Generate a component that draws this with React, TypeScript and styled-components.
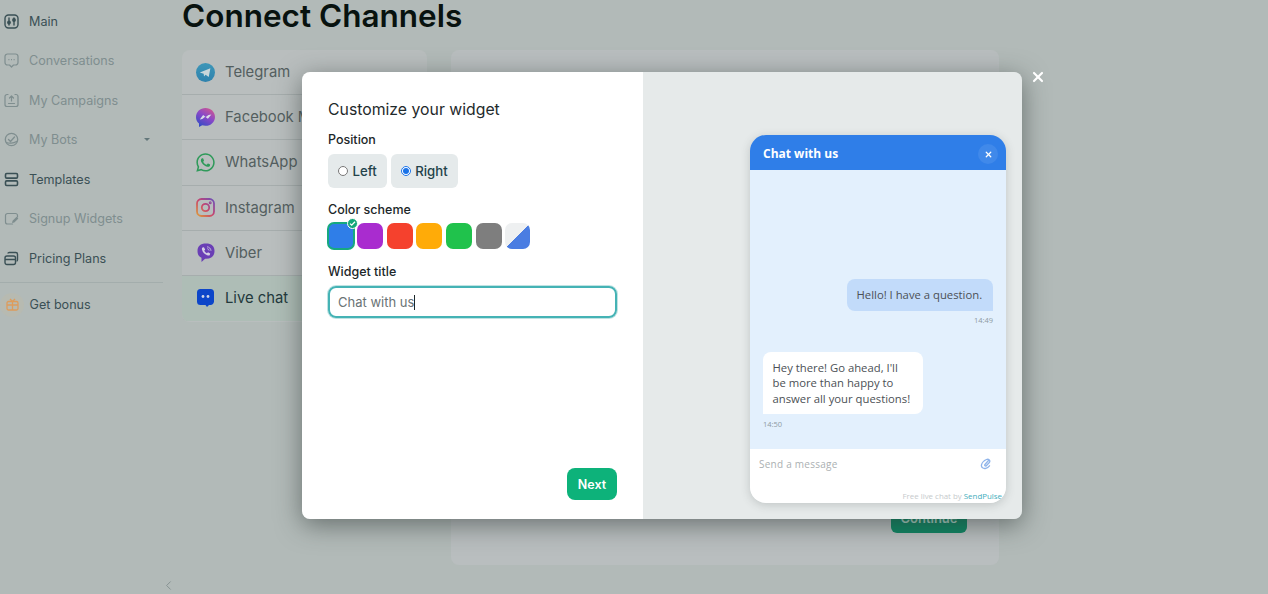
import React from 'react';
import styled, { createGlobalStyle } from 'styled-components';
import { FaWhatsapp } from 'react-icons/fa';
import { ChevronLeft, X } from 'lucide-react';

const GlobalStyle = createGlobalStyle`
    html, body {
        margin: 0;
        height: 100%;
        overflow: hidden;
        background: #b2bab8;
        font-family: Inter, "Liberation Sans", sans-serif;
    }
    * { box-sizing: border-box; }
`;

const Page = styled.div`
    position: relative;
    display: flex;
    width: 1268px;
    height: 594px;
    overflow: hidden;
`;

const Sidebar = styled.nav`
    position: relative;
    width: 163px;
    flex-shrink: 0;
    padding-top: 1.3px;
    display: flex;
    flex-direction: column;
`;

const NavRow = styled.div<{ $dim?: boolean }>`
    height: 39.5px;
    display: flex;
    align-items: center;
    gap: 10.5px;
    padding-left: 3.5px;
    font-size: 12.6px;
    color: ${p => (p.$dim ? '#7f8e8f' : '#3a5055')};
    svg { flex-shrink: 0; }
`;

const Caret = styled.span`
    margin-left: auto;
    margin-right: 13px;
    width: 0;
    height: 0;
    border-left: 3.5px solid transparent;
    border-right: 3.5px solid transparent;
    border-top: 3.5px solid #63777a;
`;

const NavDivider = styled.div`
    height: 1px;
    background: #a3adac;
    margin: 4px 0 2px;
`;

const BonusIcon = styled.span`
    width: 24px;
    height: 24px;
    margin: 0 -5px 0 -3.5px;
    border-radius: 50%;
    background: #b7bab1;
    display: flex;
    align-items: center;
    justify-content: center;
    color: #dd9c5c;
`;

const CollapseButton = styled.div`
    position: absolute;
    left: 161px;
    bottom: 1px;
    color: #7f8b8b;
    display: flex;
`;

const Main = styled.main`
    padding: 0 0 0 19px;
    flex: 1;
`;

const Heading = styled.h1`
    margin: 0 0 18px;
    height: 32px;
    font-size: 31.5px;
    line-height: 32px;
    font-weight: 600;
    color: #08120f;
`;

const Columns = styled.div`
    display: flex;
    gap: 24px;
    align-items: flex-start;
`;

const ChannelList = styled.div`
    width: 245px;
    height: 272px;
    border-radius: 8px;
    background: #b9bebe;
    overflow: hidden;
`;

const ChannelRow = styled.div<{ $active?: boolean }>`
    height: 45.2px;
    display: flex;
    align-items: center;
    gap: 10px;
    padding-left: 14px;
    font-size: 14.8px;
    color: ${p => (p.$active ? '#23393c' : '#545f60')};
    background: ${p => (p.$active ? '#aebdb6' : 'transparent')};
    border-bottom: 1px solid ${p => (p.$active ? 'transparent' : '#a6adad')};
`;

const ChannelIcon = styled.span<{ $color?: string }>`
    width: 19px;
    height: 19px;
    color: ${p => p.$color || 'inherit'};
    display: flex;
    align-items: center;
    justify-content: center;
    flex-shrink: 0;
`;

const SetupPanel = styled.div`
    width: 548px;
    height: 515px;
    border-radius: 8px;
    background: #b9bebf;
    display: flex;
    justify-content: flex-end;
    align-items: flex-end;
    padding: 0 32px 32px 0;
`;

const ContinueButton = styled.div`
    width: 76px;
    height: 33px;
    padding-top: 2px;
    border-radius: 6px;
    background: #0e8562;
    color: #a8cfc2;
    font-size: 13px;
    font-weight: 600;
    display: flex;
    align-items: center;
    justify-content: center;
`;

const Modal = styled.div`
    position: absolute;
    left: 302px;
    top: 72px;
    width: 720px;
    height: 447px;
    display: flex;
    border-radius: 8px;
    box-shadow: 0 6px 26px rgba(40, 50, 48, 0.55);
`;

const CloseButton = styled.div`
    position: absolute;
    left: 728px;
    top: -3px;
    color: #fff;
    display: flex;
`;

const FormPane = styled.div`
    width: 341px;
    padding: 27px 26px 19px 26px;
    background: #fff;
    border-radius: 8px 0 0 8px;
    display: flex;
    flex-direction: column;
`;

const FormTitle = styled.div`
    font-size: 15.8px;
    line-height: 22px;
    color: #1f2a2c;
    margin-bottom: 11px;
`;

const FieldLabel = styled.div`
    font-size: 12.5px;
    line-height: 15px;
    font-weight: 500;
    color: #1c2729;
    margin-bottom: 7px;
`;

const RadioGroup = styled.div`
    display: flex;
    gap: 4px;
    margin-bottom: 14px;
`;

const RadioOption = styled.label`
    height: 34px;
    padding: 0 10px;
    border-radius: 6px;
    background: #e5eaeb;
    display: flex;
    align-items: center;
    gap: 4.5px;
    font-size: 13.2px;
    font-weight: 500;
    color: #23424a;
    input {
        margin: 0;
        width: 10px;
        height: 10px;
        accent-color: #1a73e8;
    }
`;

const Swatches = styled.div`
    display: flex;
    align-items: center;
    gap: 3.7px;
    margin: -2px 0 14px -1px;
`;

const Swatch = styled.div<{ $color: string; $selected?: boolean }>`
    position: relative;
    width: ${p => (p.$selected ? '28px' : '26px')};
    height: ${p => (p.$selected ? '28px' : '26px')};
    margin-right: ${p => (p.$selected ? '-1.7px' : '0')};
    border-radius: 7px;
    background: ${p => p.$color};
    border: ${p => (p.$selected ? '2px solid #16a97f' : '0')};
`;

const SplitSwatch = styled(Swatch)`
    width: 25px;
    background: linear-gradient(135deg, #eef0f1 50%, #4a7de2 50%);
`;

const CheckBadge = styled.span`
    position: absolute;
    top: -6px;
    right: -5px;
    width: 9px;
    height: 9px;
    border-radius: 50%;
    background: #13a879;
    border: 1px solid #fff;
    box-sizing: content-box;
    display: flex;
    align-items: center;
    justify-content: center;
`;

const TitleField = styled.div`
    height: 32px;
    border: 2px solid #45b3b5;
    box-shadow: 0 0 0 1px #bfe3e3;
    border-radius: 8px;
    display: flex;
    align-items: center;
    padding-left: 8px;
    font-size: 13px;
    color: #6a7375;
`;

const TextCaret = styled.span`
    width: 1px;
    height: 15px;
    background: #1c2729;
`;

const FormFooter = styled.div`
    margin-top: auto;
    display: flex;
    justify-content: flex-end;
`;

const NextButton = styled.button`
    width: 50px;
    height: 32px;
    border: 0;
    border-radius: 8px;
    background: #0db27a;
    color: #fff;
    font-family: inherit;
    font-size: 12.5px;
    font-weight: 600;
`;

const PreviewPane = styled.div`
    flex: 1;
    background: #e6eaea;
    border-radius: 0 8px 8px 0;
    display: flex;
    justify-content: flex-end;
    align-items: flex-end;
    padding: 0 16px 16px 0;
`;

const Widget = styled.div`
    width: 256px;
    height: 368px;
    border-radius: 16px;
    overflow: hidden;
    display: flex;
    flex-direction: column;
    box-shadow: 0 2px 10px rgba(60, 70, 70, 0.22);
    font-family: "Open Sans", "Liberation Sans", sans-serif;
`;

const WidgetHeader = styled.div`
    height: 35px;
    flex-shrink: 0;
    background: #2f7ee8;
    color: #fff;
    display: flex;
    align-items: center;
    justify-content: space-between;
    padding: 1px 8px 0 13px;
    font-size: 12px;
    font-weight: 700;
`;

const WidgetClose = styled.span`
    width: 20px;
    height: 20px;
    margin-top: 2px;
    border-radius: 50%;
    background: #4089ea;
    display: flex;
    align-items: center;
    justify-content: center;
`;

const WidgetBody = styled.div`
    flex: 1;
    background: #e3f0fd;
    padding: 0 13px 20px;
    display: flex;
    flex-direction: column;
    justify-content: flex-end;
`;

const Bubble = styled.div<{ $own?: boolean }>`
    align-self: ${p => (p.$own ? 'flex-end' : 'flex-start')};
    width: ${p => (p.$own ? '146px' : '160px')};
    padding: 8px 9.5px;
    border-radius: ${p => (p.$own ? '8px 8px 0 8px' : '8px 8px 8px 0')};
    background: ${p => (p.$own ? '#c2dbfa' : '#fff')};
    color: #4b5055;
    font-size: 11.3px;
    line-height: 15.5px;
    white-space: pre-line;
`;

const TimeLabel = styled.div<{ $own?: boolean }>`
    font-size: 7.5px;
    line-height: 10px;
    margin-top: ${p => (p.$own ? '4px' : '5px')};
    color: #8f9ba3;
    text-align: ${p => (p.$own ? 'right' : 'left')};
    margin-bottom: ${p => (p.$own ? '27px' : '0')};
`;

const WidgetFooter = styled.div`
    height: 54px;
    flex-shrink: 0;
    background: #fff;
    padding: 8px 4px 0 9px;
    display: flex;
    flex-direction: column;
`;

const MessageRow = styled.div`
    display: flex;
    justify-content: space-between;
    align-items: center;
    font-size: 10px;
    color: #abb0b2;
    letter-spacing: 0.25px;
    svg { margin-right: 10px; }
`;

const Credit = styled.div`
    margin-top: auto;
    margin-bottom: 2px;
    text-align: right;
    font-size: 7.9px;
    color: #c6cacc;
    span { color: #45aebd; }
`;

const MainIcon = () => (
    <svg width="15" height="15" viewBox="0 0 15 15" fill="none" stroke="currentColor" strokeWidth="1.4" strokeLinecap="round">
        <rect x="1" y="1" width="13" height="13" rx="3.5" />
        <path d="M5 4v7M10 4v7" />
        <circle cx="5" cy="8.5" r="1.2" fill="currentColor" />
        <circle cx="10" cy="6" r="1.2" fill="currentColor" />
    </svg>
);

const ConversationIcon = () => (
    <svg width="15" height="15" viewBox="0 0 15 15" fill="none" stroke="currentColor" strokeWidth="1.2" strokeLinejoin="round">
        <path d="M3.5 1h8A2.5 2.5 0 0 1 14 3.5v6a2.5 2.5 0 0 1-2.5 2.5H9.5l-2 2-2-2h-2A2.5 2.5 0 0 1 1 9.5v-6A2.5 2.5 0 0 1 3.5 1z" />
        <path d="M4.4 6.6h1M7 6.6h1M9.6 6.6h1" strokeWidth="1.4" />
    </svg>
);

const CampaignIcon = () => (
    <svg width="15" height="15" viewBox="0 0 15 15" fill="none" stroke="currentColor" strokeWidth="1.2" strokeLinecap="round" strokeLinejoin="round">
        <path d="M4 1.5H3a2 2 0 0 0-2 2v8a2 2 0 0 0 2 2h9a2 2 0 0 0 2-2v-8a2 2 0 0 0-2-2h-1" />
        <path d="M7.5 8V3M5.5 5l2-2 2 2M4.5 10.5h6" />
    </svg>
);

const BotIcon = () => (
    <svg width="15" height="15" viewBox="0 0 15 15" fill="none" stroke="currentColor" strokeWidth="1.3" strokeLinecap="round" strokeLinejoin="round">
        <circle cx="7.5" cy="7.5" r="6.2" />
        <path d="M4.5 7.5l2 2 4-4.5M2.5 10.5c2 1 7 1 10-1" />
    </svg>
);

const TemplatesIcon = () => (
    <svg width="15" height="15" viewBox="0 0 15 15" fill="none" stroke="currentColor" strokeWidth="1.6">
        <rect x="1.5" y="1.5" width="12" height="4.6" rx="1.2" />
        <rect x="1.5" y="8.9" width="12" height="4.6" rx="1.2" />
    </svg>
);

const SignupIcon = () => (
    <svg width="15" height="15" viewBox="0 0 15 15" fill="none" stroke="currentColor" strokeWidth="1.2" strokeLinecap="round">
        <path d="M13.5 6V4.5a2 2 0 0 0-2-2h-8a2 2 0 0 0-2 2v6.5a2 2 0 0 0 2 2h5" />
        <path d="M13.5 7.5l-3.5 3.5-1.2.3.3-1.3 3.5-3.4z" fill="currentColor" />
    </svg>
);

const PricingIcon = () => (
    <svg width="15" height="15" viewBox="0 0 15 15" fill="none" stroke="currentColor" strokeWidth="1.4">
        <rect x="1" y="5" width="10.5" height="8.5" rx="2" />
        <path d="M1 8.5h10.5M4 2.5c0-.7.6-1 1.2-1h6.6c1 0 1.7.7 1.7 1.7v5.6c0 .6-.4 1.2-1 1.2" />
    </svg>
);

const GiftIcon = () => (
    <svg width="13" height="13" viewBox="0 0 13 13" fill="none" stroke="currentColor" strokeWidth="1.3">
        <rect x="1" y="3.5" width="11" height="8.5" rx="1.5" />
        <path d="M1 7h11M6.5 3.5V12M4 1l2.5 2.5L9 1" />
    </svg>
);

const TelegramIcon = () => (
    <svg width="19" height="19" viewBox="0 0 19 19">
        <defs>
            <linearGradient id="telegram" x1="0.5" y1="0" x2="0.5" y2="1">
                <stop offset="0" stopColor="#3d96b8" />
                <stop offset="1" stopColor="#2f82ad" />
            </linearGradient>
        </defs>
        <circle cx="9.5" cy="9.5" r="9.5" fill="url(#telegram)" />
        <path d="M3.8 9.4L14.4 5.2 12.7 14 9.6 11.8 8 13.4 7.7 10.8z" fill="#c9d6da" />
    </svg>
);

const MessengerIcon = () => (
    <svg width="19" height="19" viewBox="0 0 19 19">
        <defs>
            <linearGradient id="messenger" x1="0.2" y1="1" x2="0.8" y2="0">
                <stop offset="0" stopColor="#2f4cc4" />
                <stop offset="0.55" stopColor="#8a48c8" />
                <stop offset="1" stopColor="#d0578f" />
            </linearGradient>
        </defs>
        <path d="M9.5 0C4.2 0 0 3.9 0 9c0 2.7 1.1 5 3 6.6V19l3.2-1.7c1 .3 2.1.5 3.3.5 5.3 0 9.5-3.9 9.5-8.9S14.8 0 9.5 0z" fill="url(#messenger)" />
        <path d="M3.8 11.5l3.300-4.400 2.700 2 2.700-2 2.900-.6-3.500 4.300-2.700-2-2.900 2.100z" fill="#d9dce8" />
    </svg>
);

const InstagramIcon = () => (
    <svg width="19" height="19" viewBox="0 0 19 19" fill="none" stroke="url(#instagram)" strokeWidth="1.8">
        <defs>
            <linearGradient id="instagram" gradientUnits="userSpaceOnUse" x1="1" y1="18" x2="18" y2="1">
                <stop offset="0" stopColor="#dd9a3a" />
                <stop offset="0.5" stopColor="#c8446e" />
                <stop offset="1" stopColor="#6a50bc" />
            </linearGradient>
        </defs>
        <rect x="1" y="1" width="17" height="17" rx="4.5" />
        <circle cx="9.5" cy="9.5" r="3.7" />
        <circle cx="14.2" cy="4.8" r="0.6" />
    </svg>
);

const ViberIcon = () => (
    <svg width="18" height="20" viewBox="0 0 18 20">
        <path d="M9 0.5C3.5 0.5 0.5 3 0.5 8c0 3.400 1.300 5.600 4 6.700V19l3.600-3.300H9c5.500 0 8.500-2.700 8.500-7.700S14.500 0.500 9 0.500z" fill="#6a3fb5" />
        <path d="M5.500 4.500l1.400-.3 1.300 2.200-.9 1c.5 1.300 1.400 2.200 2.700 2.800l1-1 2.200 1.400-.4 1.400c-.3.500-1 .7-1.800.5C7.700 11.600 5.600 9.300 4.900 6.200c-.1-.8.100-1.400.6-1.700z" fill="#d5cfe4" />
        <path d="M10 3.800c2.200.2 3.800 1.700 4 4M10.200 5.700c1 .1 1.800.9 1.900 1.900" fill="none" stroke="#d5cfe4" strokeWidth="0.8" />
    </svg>
);

const LiveChatIcon = () => (
    <svg width="17" height="18" viewBox="0 0 17 18">
        <path d="M3.500 0h10A3.500 3.500 0 0 1 17 3.500v9c0 1.900-1.600 3.500-3.500 3.500H12l-2 2-1.500-2H3.500A3.500 3.500 0 0 1 0 12.500v-9A3.500 3.500 0 0 1 3.500 0z" fill="#0d46c9" />
        <circle cx="6" cy="7.5" r="1.4" fill="#cfd6e8" />
        <circle cx="11" cy="7.5" r="1.4" fill="#cfd6e8" />
    </svg>
);

const AttachIcon = () => (
    <svg width="12" height="12" viewBox="0 0 12 12" fill="none" stroke="#8fb4ea" strokeWidth="1.3" strokeLinecap="round">
        <path d="M8.500 2.500L5 6.500c-.8 1 .4 2 1.300 1.200l3-3.200c1.400-1.600-.6-4-2.800-3C4 2.600 2 4.800 1.500 6.800c-.6 2.600 2 4.200 4.300 3.500 1.400-.4 2.700-1.300 3.700-2.500" />
    </svg>
);

const navItems = [
    { label: 'Main', icon: <MainIcon /> },
    { label: 'Conversations', icon: <ConversationIcon />, dim: true },
    { label: 'My Campaigns', icon: <CampaignIcon />, dim: true },
    { label: 'My Bots', icon: <BotIcon />, dim: true, menu: true },
    { label: 'Templates', icon: <TemplatesIcon /> },
    { label: 'Signup Widgets', icon: <SignupIcon />, dim: true },
    { label: 'Pricing Plans', icon: <PricingIcon /> },
];

const channels = [
    { label: 'Telegram', icon: <TelegramIcon /> },
    { label: 'Facebook Messenger', icon: <MessengerIcon /> },
    { label: 'WhatsApp', icon: <FaWhatsapp size={21} color="#2f9a5a" /> },
    { label: 'Instagram', icon: <InstagramIcon /> },
    { label: 'Viber', icon: <ViberIcon /> },
    { label: 'Live chat', icon: <LiveChatIcon />, active: true },
];

const colors = ['#2f7ee8', '#a92ccf', '#f5412d', '#ffab08', '#20c24c', '#7e7e7e'];

const App = () => {
    return <Page>
        <GlobalStyle />
        <Sidebar>
            {navItems.map(item => (
                <NavRow key={item.label} $dim={item.dim}>
                    {item.icon}
                    {item.label}
                    {item.menu && <Caret />}
                </NavRow>
            ))}
            <NavDivider />
            <NavRow>
                <BonusIcon><GiftIcon /></BonusIcon>
                Get bonus
            </NavRow>
            <CollapseButton><ChevronLeft size={15} strokeWidth={1.4} /></CollapseButton>
        </Sidebar>
        <Main>
            <Heading>Connect Channels</Heading>
            <Columns>
                <ChannelList>
                    {channels.map(channel => (
                        <ChannelRow key={channel.label} $active={channel.active}>
                            <ChannelIcon>{channel.icon}</ChannelIcon>
                            {channel.label}
                        </ChannelRow>
                    ))}
                </ChannelList>
                <SetupPanel>
                    <ContinueButton>Continue</ContinueButton>
                </SetupPanel>
            </Columns>
        </Main>
        <Modal>
            <CloseButton><X size={16} strokeWidth={3.2} /></CloseButton>
            <FormPane>
                <FormTitle>Customize your widget</FormTitle>
                <FieldLabel>Position</FieldLabel>
                <RadioGroup>
                    <RadioOption><input type="radio" name="position" readOnly />Left</RadioOption>
                    <RadioOption><input type="radio" name="position" defaultChecked readOnly />Right</RadioOption>
                </RadioGroup>
                <FieldLabel>Color scheme</FieldLabel>
                <Swatches>
                    {colors.map((color, i) => (
                        <Swatch key={color} $color={color} $selected={i === 0}>
                            {i === 0 && <CheckBadge>
                                <svg width="7" height="7" viewBox="0 0 7 7" fill="none" stroke="#fff" strokeWidth="1.3">
                                    <path d="M1 3.6l1.7 1.6L6 1.8" />
                                </svg>
                            </CheckBadge>}
                        </Swatch>
                    ))}
                    <SplitSwatch $color="#eef0f1" />
                </Swatches>
                <FieldLabel>Widget title</FieldLabel>
                <TitleField>Chat with us<TextCaret /></TitleField>
                <FormFooter>
                    <NextButton>Next</NextButton>
                </FormFooter>
            </FormPane>
            <PreviewPane>
                <Widget>
                    <WidgetHeader>
                        Chat with us
                        <WidgetClose><X size={9} strokeWidth={3.4} /></WidgetClose>
                    </WidgetHeader>
                    <WidgetBody>
                        <Bubble $own>Hello! I have a question.</Bubble>
                        <TimeLabel $own>14:49</TimeLabel>
                        <Bubble>{"Hey there! Go ahead, I'll\nbe more than happy to\nanswer all your questions!"}</Bubble>
                        <TimeLabel>14:50</TimeLabel>
                    </WidgetBody>
                    <WidgetFooter>
                        <MessageRow>
                            Send a message
                            <AttachIcon />
                        </MessageRow>
                        <Credit>Free live chat by <span>SendPulse</span></Credit>
                    </WidgetFooter>
                </Widget>
            </PreviewPane>
        </Modal>
    </Page>
}

export default App;
